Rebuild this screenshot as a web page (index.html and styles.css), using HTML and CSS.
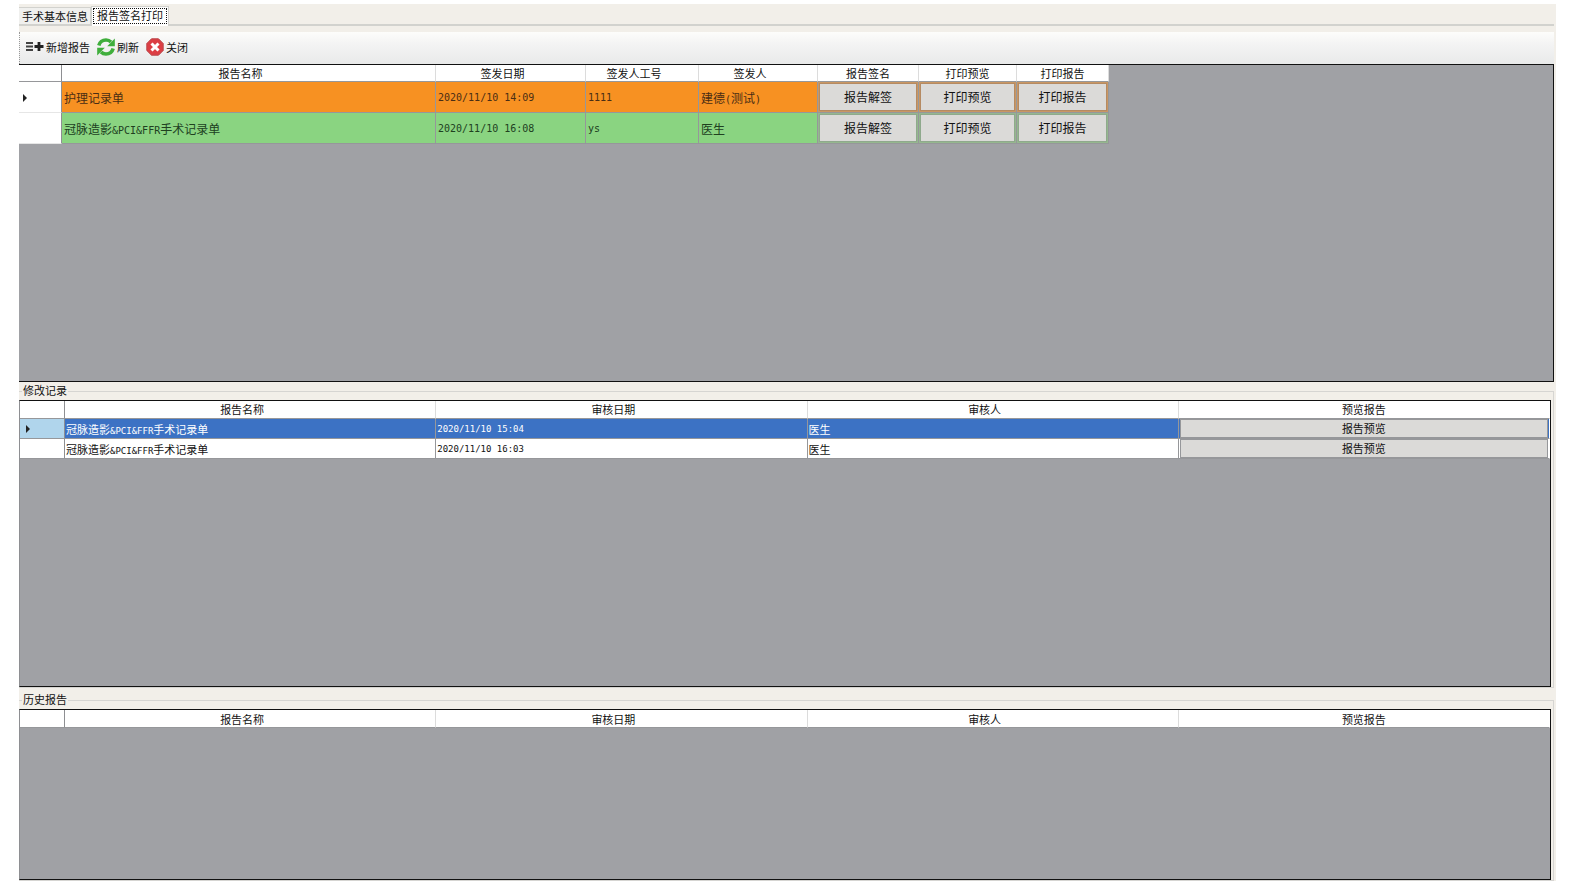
FILE: index.html
```html
<!DOCTYPE html>
<html lang="zh-CN">
<head>
    <meta charset="UTF-8">
    <meta name="viewport" content="width=device-width, initial-scale=1.0">
    <title>报告签名打印</title>
    <link rel="stylesheet" href="styles.css">
</head>
<body>
    <main class="app">
        <div class="tabs" role="tablist">
            <button type="button" class="tab" role="tab" aria-selected="false">手术基本信息</button>
            <button type="button" class="tab active" role="tab" aria-selected="true"><span>报告签名打印</span></button>
        </div>

        <div class="toolbar">
            <button type="button" class="tool">
                <svg width="18" height="12" viewBox="0 0 18 12">
                    <path d="M0 2h7M0 5.500h7M0 9h7" stroke="#444" stroke-width="2.200"/>
                    <path d="M8.500 5.500h9M13 1v9" stroke="#222" stroke-width="2.800"/>
                </svg>
                新增报告
            </button>
            <button type="button" class="tool">
                <svg width="18" height="18" viewBox="0 0 18 18">
                    <path d="M1.800 7.500C3 3.500 6 2 9 2c2 0 3.800.8 5 2" fill="none" stroke="#3fae3c" stroke-width="3.600"/>
                    <path d="M17.800.6v7.600h-7.600z" fill="#3fae3c"/>
                    <path d="M16.200 10.500C15 14.500 12 16 9 16c-2 0-3.800-.8-5-2" fill="none" stroke="#3fae3c" stroke-width="3.600"/>
                    <path d="M.2 17.400V9.800h7.600z" fill="#3fae3c"/>
                </svg>
                刷新
            </button>
            <button type="button" class="tool">
                <svg width="18" height="18" viewBox="0 0 18 18">
                    <path d="M5.500.8h7l4.700 4.700v7l-4.700 4.700h-7L.8 12.500v-7z" fill="#dc3e44" stroke="#b9474a"/>
                    <path d="M5.500 5.500l7 7M12.500 5.500l-7 7" stroke="#fff" stroke-width="3"/>
                </svg>
                关闭
            </button>
        </div>

        <div class="grid grid-reports">
            <table class="reports">
                <colgroup>
                    <col class="col-head"><col class="col-name"><col class="col-date"><col class="col-code">
                    <col class="col-signer"><col class="col-sign"><col class="col-preview"><col class="col-print">
                </colgroup>
                <thead>
                    <tr>
                        <th></th>
                        <th class="sortable">报告名称</th>
                        <th class="sortable">签发日期</th>
                        <th class="sortable">签发人工号</th>
                        <th class="sortable">签发人</th>
                        <th>报告签名</th>
                        <th>打印预览</th>
                        <th>打印报告</th>
                    </tr>
                </thead>
                <tbody>
                    <tr class="orange">
                        <th scope="row"><i class="marker"></i></th>
                        <td>护理记录单</td>
                        <td class="mono">2020/11/10 14:09</td>
                        <td class="mono">1111</td>
                        <td>建德<span class="mono">(</span>测试<span class="mono">)</span></td>
                        <td class="action"><button type="button">报告解签</button></td>
                        <td class="action"><button type="button">打印预览</button></td>
                        <td class="action"><button type="button">打印报告</button></td>
                    </tr>
                    <tr class="green">
                        <th scope="row"></th>
                        <td>冠脉造影<span class="mono">&amp;PCI&amp;FFR</span>手术记录单</td>
                        <td class="mono">2020/11/10 16:08</td>
                        <td class="mono">ys</td>
                        <td>医生</td>
                        <td class="action"><button type="button">报告解签</button></td>
                        <td class="action"><button type="button">打印预览</button></td>
                        <td class="action"><button type="button">打印报告</button></td>
                    </tr>
                </tbody>
            </table>
        </div>

        <fieldset class="group group-changes">
            <legend>修改记录</legend>
            <div class="grid">
                <table class="records">
                    <colgroup><col class="col-head"><col><col><col><col></colgroup>
                    <thead>
                        <tr>
                            <th></th>
                            <th class="sortable">报告名称</th>
                            <th class="sortable">审核日期</th>
                            <th class="sortable">审核人</th>
                            <th>预览报告</th>
                        </tr>
                    </thead>
                    <tbody>
                        <tr class="selected">
                            <th scope="row"><i class="marker"></i></th>
                            <td>冠脉造影<span class="mono">&amp;PCI&amp;FFR</span>手术记录单</td>
                            <td class="mono">2020/11/10 15:04</td>
                            <td>医生</td>
                            <td class="action"><button type="button">报告预览</button></td>
                        </tr>
                        <tr>
                            <th scope="row"></th>
                            <td>冠脉造影<span class="mono">&amp;PCI&amp;FFR</span>手术记录单</td>
                            <td class="mono">2020/11/10 16:03</td>
                            <td>医生</td>
                            <td class="action"><button type="button">报告预览</button></td>
                        </tr>
                    </tbody>
                </table>
            </div>
        </fieldset>

        <fieldset class="group group-history">
            <legend>历史报告</legend>
            <div class="grid">
                <table class="records">
                    <colgroup><col class="col-head"><col><col><col><col></colgroup>
                    <thead>
                        <tr>
                            <th></th>
                            <th class="sortable">报告名称</th>
                            <th class="sortable">审核日期</th>
                            <th class="sortable">审核人</th>
                            <th>预览报告</th>
                        </tr>
                    </thead>
                </table>
            </div>
        </fieldset>
    </main>
</body>
</html>
```
FILE: styles.css
```css
* {
    box-sizing: border-box;
}
body {
    margin: 0;
    padding: 4px 19px;
    background-color: #fff;
    color: #111;
    font-family: "Noto Sans CJK SC", sans-serif;
    font-size: 11px;
    line-height: 16px;
}
button {
    margin: 0;
    padding: 0;
    border: none;
    background: none;
    color: inherit;
    font: inherit;
    white-space: nowrap;
}
.app {
    display: flex;
    flex-direction: column;
    height: calc(100vh - 8px);
    padding-right: 2px;
    background-color: #f2efe9;
}
.mono {
    font-family: "DejaVu Sans Mono", monospace;
}
span.mono {
    line-height: 1;
}

/* Tabs */
.tabs {
    display: flex;
    align-items: flex-end;
    height: 22px;
    margin-bottom: 6px;
    padding-top: 2px;
    border-bottom: 2px solid #d2d2ce;
}
.tab {
    height: 17px;
    padding: 0 2px 0 3px;
    border: 1px solid #d2d2ce;
    border-width: 1px 1px 0 0;
    background-color: #f0f0ee;
}
.tab.active {
    height: 20px;
    margin-bottom: -2px;
    padding: 1px 1px 2px;
    border: 1px solid #d2d2ce;
    border-bottom: none;
    background-color: #fff;
}
.tab.active span {
    display: block;
    height: 16px;
    padding: 0 3px;
    border: 1px dotted #111;
    line-height: 13px;
}

/* Toolbar */
.toolbar {
    display: flex;
    align-items: center;
    gap: 7px;
    height: 32px;
    padding: 0 0 2px 6px;
    border-left: 1px dotted #999;
    background: linear-gradient(#fdfdfb, #f3f3f3 40%, #e9eaea);
}
.tool {
    display: flex;
    align-items: center;
    gap: 2px;
}

/* Data grids */
.grid {
    overflow: hidden;
    border: 1px solid #111;
    border-left-color: #8e8f92;
    background-color: #a0a1a5;
}
.grid-reports {
    flex: 318 1 0;
    margin-bottom: 1px;
    border-left: none;
}
table {
    border-collapse: separate;
    border-spacing: 0;
    table-layout: fixed;
}
th, td {
    overflow: hidden;
    padding: 0 2px;
    border-right: 1px solid #96979a;
    border-bottom: 1px solid #96979a;
    background-color: #fff;
    font-weight: normal;
    text-align: left;
    white-space: nowrap;
}
thead th {
    height: 17px;
    padding: 0;
    border-right-color: #dcdcdc;
    line-height: 16px;
    text-align: center;
}
thead th.sortable {
    padding-right: 16px;
}
th:first-child {
    border-right-color: #8e8f92;
}
.marker {
    display: block;
    width: 0;
    height: 0;
    margin-left: 2px;
    border: 4px solid transparent;
    border-right: none;
    border-left-color: #222;
}
.action button {
    display: block;
    width: 100%;
    border: 1px solid #96979a;
    background-color: #dbdad8;
    color: #111;
}

.reports {
    width: 1090px;
}
.reports .col-head { width: 43px; }
.reports .col-name { width: 374px; }
.reports .col-date { width: 150px; }
.reports .col-code { width: 113px; }
.reports .col-signer { width: 119px; }
.reports .col-sign { width: 101px; }
.reports .col-preview { width: 98px; }
.reports .col-print { width: 92px; }
.reports tbody th,
.reports tbody td {
    height: 31px;
    padding-top: 2px;
    font-size: 12px;
}
.reports tbody th {
    border-bottom-color: #e6e6e6;
}
.reports tbody .mono {
    font-size: 10px;
}
.reports .orange td {
    background-color: #f79122;
    color: #4a2d14;
}
.reports .green td {
    background-color: #8ad481;
    color: #20401f;
}
.reports tbody .action {
    padding: 1px;
}
.reports .action button {
    height: 28px;
}
.reports .orange button {
    border: 1px solid #b58a62;
}
.reports .green button {
    border: 1px solid #8fa98c;
}
.reports .orange .action {
    background-color: #c99764;
}
.reports .green .action {
    background-color: #95b78f;
}

.records {
    width: 100%;
}
.records .col-head {
    width: 45px;
}
.records thead th {
    height: 18px;
}
.records tbody th,
.records tbody td {
    height: 20px;
    padding: 1px 1px 0;
    line-height: 16px;
}
.records tbody .mono {
    font-size: 9px;
}
.records tbody .action {
    padding: 0 1px;
}
.records .action button {
    height: 19px;
    line-height: 17px;
}
.records .selected td {
    background-color: #3c72c4;
    color: #fff;
}
.records .selected th {
    background-color: #b0d5ec;
}
.records .marker {
    margin-left: 5px;
}
.records th:last-child,
.records td:last-child {
    border-right-color: #fff;
}

/* Group boxes */
.group {
    display: flex;
    min-width: 0;
    min-height: 0;
    margin: 0;
    padding: 0 2px 0 0;
    border: 1px solid #d6d5d2;
    border-left: none;
}
.group legend {
    height: 17px;
    margin-left: 3px;
    padding: 0 1px;
    line-height: 14px;
}
.group .grid {
    flex: 1;
}
.group-changes {
    flex: 306 1 0;
    margin-bottom: 4px;
}
.group-history {
    flex: 188 1 0;
}
```
